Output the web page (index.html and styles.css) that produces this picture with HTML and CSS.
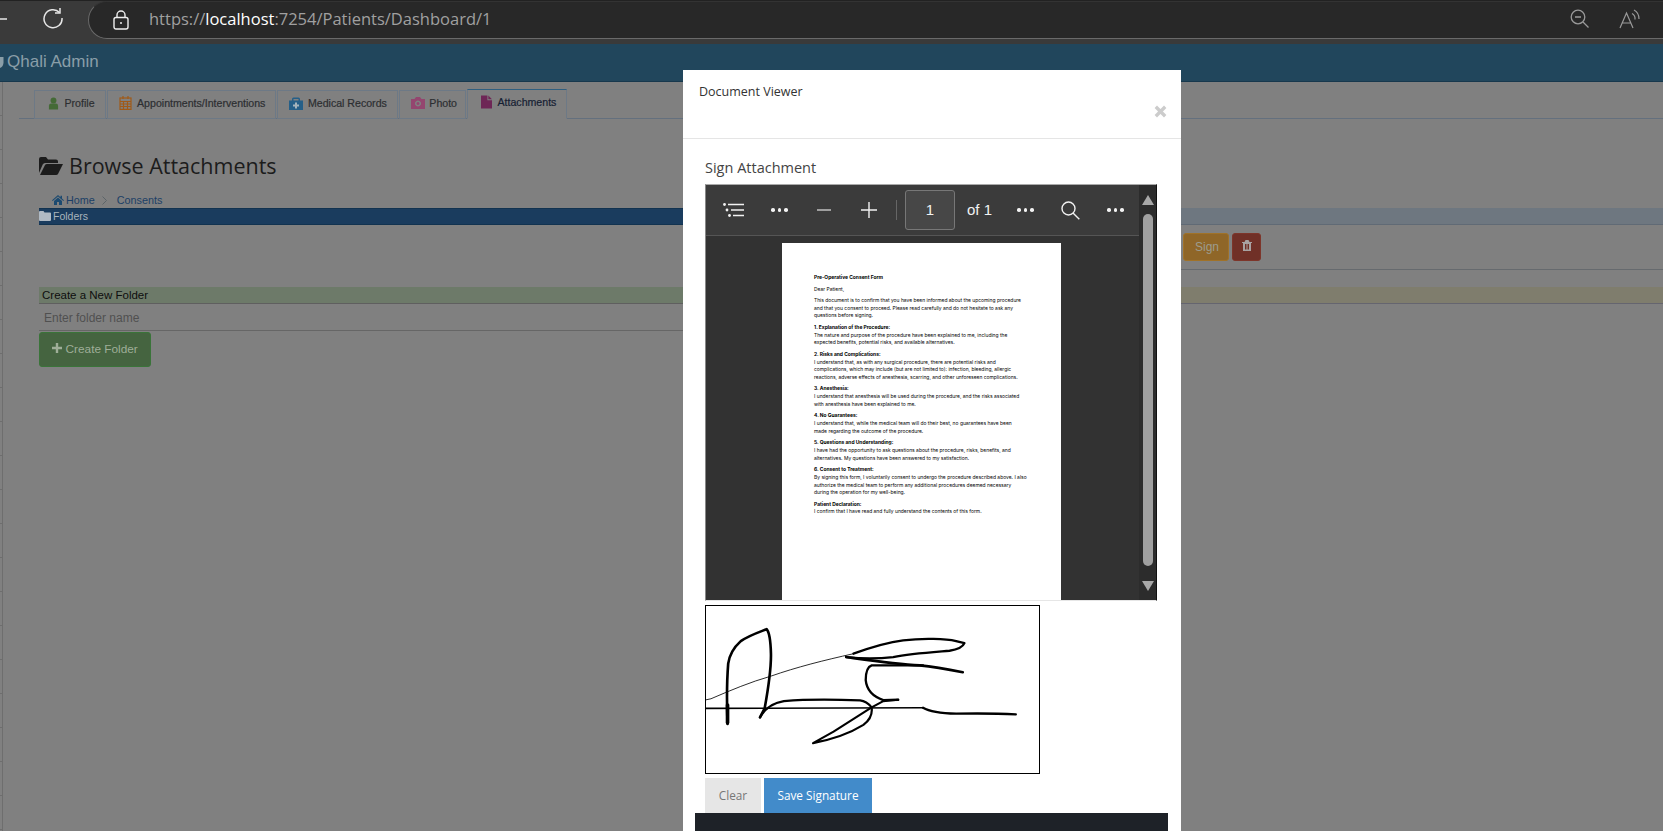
FILE: index.html
```html
<!DOCTYPE html>
<html lang="en">
<head>
    <meta charset="UTF-8">
    <meta name="viewport" content="width=device-width, initial-scale=1.0">
    <title>Patient Dashboard</title>
    <link rel="stylesheet" href="styles.css">
</head>
<body>
    <div class="browser-bar">
        <svg class="back-icon" width="8" height="4" viewBox="0 0 8 4"><path d="M0 2h7" stroke="#e8e8e8" stroke-width="1.5"/></svg>
        <svg class="reload-icon" width="22" height="22" viewBox="0 0 22 22" fill="none" stroke="#e6e6e6" stroke-width="1.5"><path d="M17.500 5.500A9 9 0 1 0 20 11"/><path d="M13 6h5V1"/></svg>
        <div class="url-pill">
            <svg class="lock-icon" width="16" height="20" viewBox="0 0 16 20" fill="none" stroke="#eee" stroke-width="1.4"><rect x="1" y="7.500" width="14" height="11.500" rx="2"/><path d="M4 7.500V5a4 4 0 0 1 8 0v2.500"/><circle cx="8" cy="13" r="1" fill="#eee" stroke="none"/></svg>
            <span class="url-text">https://<b>localhost</b>:7254/Patients/Dashboard/1</span>
            <svg class="zoom-out-icon" width="19" height="19" viewBox="0 0 19 19" fill="none" stroke="#9a9a9a" stroke-width="1.3"><circle cx="8" cy="8" r="6.800"/><path d="M5 8h6M13 13l5.500 5.500"/></svg>
            <svg class="read-icon" width="21" height="20" viewBox="0 0 21 20" fill="none" stroke="#9a9a9a" stroke-width="1.2"><path d="M1 19 7.500 4 14 19M3.500 14h8"/><path d="M13 4.500a6 6 0 0 1 3 6M15 1a10 10 0 0 1 5 9"/></svg>
        </div>
    </div>

    <div class="page">
        <div class="navbar">
            <svg class="brand-icon" width="4" height="11" viewBox="0 0 4 11"><path d="M0 0h3.500v6Q3 10 0 11z" fill="#8a9ea8"/></svg>
            <span class="brand">Qhali Admin</span>
        </div>

        <div class="content">
            <ul class="tabs">
                <li class="tab"><span class="tab-icon"><svg width="11" height="13" viewBox="0 0 12 13" fill="#446a36"><circle cx="6" cy="3.200" r="3.200"/><path d="M1 13V9q0-2.500 2.500-2.500h5Q11 6.500 11 9v4z"/></svg></span>Profile</li>
                <li class="tab"><span class="tab-icon"><svg width="13" height="14" viewBox="0 0 13 14" fill="none" stroke="#a05a18" stroke-width="1.200"><rect x="1" y="2" width="11" height="11.400"/><path d="M1 5.500h11M1 8h11M1 10.500h11M4.500 5.500v8M8.500 5.500v8M4 0v3M9 0v3"/></svg></span>Appointments/Interventions</li>
                <li class="tab"><span class="tab-icon"><svg width="14" height="13" viewBox="0 0 14 13"><path fill="#255f88" d="M0 3.500h3V2q0-1.500 1.500-1.500h5Q11 .5 11 2v1.500h3V13H0zM4.500 2v1.500h5V2z"/><path fill="#a4b4bc" d="M6 5.500h2v2h2v2H8v2H6v-2H4v-2h2z"/></svg></span>Medical Records</li>
                <li class="tab tab-photo"><span class="tab-icon"><svg width="14" height="12" viewBox="0 0 14 12"><path fill-rule="evenodd" fill="#94466f" d="M0 2h3.500L5 0h4l1.500 2H14v10H0zM7 3.500a3 3 0 1 0 .01 0zM7 5a1.500 1.500 0 1 1-.01 0z"/></svg></span>Photo</li>
                <li class="tab tab-active"><span class="tab-icon"><svg width="11" height="14" viewBox="0 0 12 14"><path fill="#6e2656" d="M0 0h7v5h5v9H0zM8 0l4 4H8z"/></svg></span>Attachments</li>
            </ul>

            <h1 class="page-title">
                <svg width="24" height="18" viewBox="0 0 24 18"><path fill="#1c1c1c" d="M0 16V2q0-2 2-2h5l2 2.500h8q2 0 2 2V6H6q-1.500 0-2.300 1.500z"/><path fill="#1c1c1c" d="M1 18 6 8q.5-1 2-1h16l-5 10q-.5 1-2 1z"/></svg>
                Browse Attachments
            </h1>

            <div class="breadcrumb">
                <svg width="12" height="10" viewBox="0 0 12 10"><path fill="#1c4a70" d="M6 0l2.500 2.200V.8h1.500v2.700L12 5.300l-.7.7L6 1.400.7 6 0 5.300zM2 6l4-3.400L10 6v4H7V7H5v3H2z"/></svg>
                <span class="crumb">Home</span>
                <svg class="crumb-sep" width="5" height="9" viewBox="0 0 5 9" fill="none" stroke="#5c6468" stroke-width="1"><path d="M.5.5l4 4-4 4"/></svg>
                <span class="crumb">Consents</span>
            </div>

            <div class="panels">
                <div class="panel-head panel-head-primary">
                    <svg width="12" height="10" viewBox="0 0 12 10"><path fill="#b0bac4" d="M0 1q0-1 1-1h3.500l1 1.500H11q1 0 1 1V9q0 1-1 1H1q-1 0-1-1z"/></svg>
                    Folders
                </div>
                <div class="files-col">
                    <div class="panel-head panel-head-info"></div>
                    <div class="file-row">
                        <button class="btn btn-sign">Sign</button>
                        <button class="btn btn-delete"><svg width="10" height="11" viewBox="0 0 10 11"><path fill="#a8a2a2" fill-rule="evenodd" d="M0 2h2.500L3.500 0h3l1 2H10v1H9v8H1V3H0zM3 4v5.500h1V4zM4.500 4v5.500h1V4zM6 4v5.500h1V4z"/></svg></button>
                    </div>
                </div>

                <div class="new-folder">
                    <div class="panel-head panel-head-success">Create a New Folder</div>
                    <input class="folder-input" type="text" placeholder="Enter folder name">
                    <button class="btn btn-create"><svg width="10" height="10" viewBox="0 0 10 10"><path fill="#9fae98" d="M3.800 0h2.400v3.800H10v2.400H6.200V10H3.800V6.200H0V3.800h3.800z"/></svg> Create Folder</button>
                </div>
                <div class="panel-head panel-head-warning"></div>
            </div>
        </div>

        <div class="modal">
            <div class="modal-header">
                <span class="modal-title">Document Viewer</span>
                <svg class="modal-close" width="13" height="13" viewBox="0 0 13 13"><path d="M1.800 1.800l9.400 9.400M11.200 1.800l-9.400 9.400" stroke="#ccc" stroke-width="3.400"/></svg>
            </div>
            <div class="modal-body">
                <h4 class="sign-title">Sign Attachment</h4>

                <div class="pdf-viewer">
                    <div class="pdf-main">
                        <div class="pdf-toolbar">
                            <svg class="tb-list" width="22" height="14" viewBox="0 0 22 14" fill="#f2f2f2"><circle cx="1.500" cy="1.500" r="1.400"/><circle cx="4" cy="7" r="1.400"/><circle cx="6.500" cy="12.500" r="1.400"/><path d="M5 .8h16v1.400H5zM8 6.300h13v1.400H8zM10 11.800h11v1.400H10z"/></svg>
                            <span class="tb-dots tb-dots-1"><i></i><i></i><i></i></span>
                            <svg class="tb-minus" width="14" height="2" viewBox="0 0 14 2"><path d="M0 1h14" stroke="#ccc" stroke-width="1.400"/></svg>
                            <svg class="tb-plus" width="16" height="16" viewBox="0 0 16 16"><path d="M0 8h16M8 0v16" stroke="#f2f2f2" stroke-width="1.400"/></svg>
                            <span class="tb-divider"></span>
                            <span class="tb-page">1</span>
                            <span class="tb-of">of 1</span>
                            <span class="tb-dots tb-dots-2"><i></i><i></i><i></i></span>
                            <svg class="tb-search" width="19" height="19" viewBox="0 0 19 19" fill="none" stroke="#f2f2f2" stroke-width="1.400"><circle cx="7.500" cy="7.500" r="6.500"/><path d="M12 12l6.300 6.300"/></svg>
                            <span class="tb-dots tb-dots-3"><i></i><i></i><i></i></span>
                        </div>
                        <div class="pdf-canvas">
                            <div class="pdf-page">
                                <p><b>Pre-Operative Consent Form</b></p>
                                <p>Dear Patient,</p>
                                <p>This document is to confirm that you have been informed about the upcoming procedure<br>and that you consent to proceed. Please read carefully and do not hesitate to ask any<br>questions before signing.</p>
                                <p><b>1. Explanation of the Procedure:</b><br>The nature and purpose of the procedure have been explained to me, including the<br>expected benefits, potential risks, and available alternatives.</p>
                                <p><b>2. Risks and Complications:</b><br>I understand that, as with any surgical procedure, there are potential risks and<br>complications, which may include (but are not limited to): infection, bleeding, allergic<br>reactions, adverse effects of anesthesia, scarring, and other unforeseen complications.</p>
                                <p><b>3. Anesthesia:</b><br>I understand that anesthesia will be used during the procedure, and the risks associated<br>with anesthesia have been explained to me.</p>
                                <p><b>4. No Guarantees:</b><br>I understand that, while the medical team will do their best, no guarantees have been<br>made regarding the outcome of the procedure.</p>
                                <p><b>5. Questions and Understanding:</b><br>I have had the opportunity to ask questions about the procedure, risks, benefits, and<br>alternatives. My questions have been answered to my satisfaction.</p>
                                <p><b>6. Consent to Treatment:</b><br>By signing this form, I voluntarily consent to undergo the procedure described above. I also<br>authorize the medical team to perform any additional procedures deemed necessary<br>during the operation for my well-being.</p>
                                <p><b>Patient Declaration:</b><br>I confirm that I have read and fully understand the contents of this form.</p>
                            </div>
                        </div>
                    </div>
                    <div class="pdf-scrollbar">
                        <span class="arrow-up"></span>
                        <span class="thumb"></span>
                        <span class="arrow-down"></span>
                    </div>
                </div>

                <div class="signature-box">
                    <svg width="333" height="167" viewBox="46 46 1003 504" fill="none" stroke="#000" stroke-linecap="round" stroke-linejoin="round">
                        <path stroke-width="5" d="M46 355L700 353"/>
                        <path stroke-width="7" d="M700 353C720 365 750 370 800 371C860 370 920 370 980 373"/>
                        <path stroke-width="8" d="M110 402C108 350 108 270 112 220C116 190 130 170 150 152C175 135 205 125 228 116C236 125 240 150 241 190C242 240 232 300 222 355L208 382"/>
                        <path stroke-width="11" d="M110 345L110 398"/>
                        <path stroke-width="2.500" d="M46 329L60 326C120 300 180 275 240 258C320 230 400 210 490 190"/>
                        <path stroke-width="7" d="M490 190C540 172 600 155 640 150C700 142 770 145 800 152L825 158C820 170 800 178 780 181C720 186 660 190 610 200C570 205 510 205 468 200"/>
                        <path stroke-width="8" d="M468 200C540 210 620 222 690 225C740 230 790 240 820 246"/>
                        <path stroke-width="7" d="M700 225L545 225C530 230 527 250 527 270C530 300 550 320 580 330L625 329"/>
                        <path stroke-width="6.500" d="M625 329L580 333L545 352L430 425L368 460C420 450 480 430 520 405C540 390 548 375 545 352C535 340 525 333 510 331C440 328 340 328 280 333C250 338 225 350 208 382"/>
                    </svg>
                </div>

                <div class="sign-actions">
                    <button class="sign-btn sign-clear">Clear</button>
                    <button class="sign-btn sign-save">Save Signature</button>
                </div>

                <div class="modal-dark-bar"></div>
            </div>
        </div>
    </div>
</body>
</html>
```

FILE: styles.css
```css
* {
    box-sizing: border-box;
}

html, body {
    margin: 0;
    height: 831px;
    overflow: hidden;
}

body {
    font-family: "Liberation Sans", Arial, sans-serif;
    background-color: #808080;
}

/* browser chrome */
.browser-bar {
    height: 44px;
    background-color: #3a3a3a;
    display: flex;
    align-items: flex-start;
    border-top: 1px solid #222;
    overflow: hidden;
}

.back-icon {
    margin-top: 16px;
    flex-shrink: 0;
}

.reload-icon {
    margin: 6px 0 0 34px;
    flex-shrink: 0;
}

.url-pill {
    flex: 1;
    height: 38px;
    margin: 0 -40px 0 24px;
    padding: 0 62px 0 24px;
    background-color: #282828;
    border: 1px solid #6a6a6a;
    border-top-color: #333;
    border-radius: 19px;
    display: flex;
    align-items: center;
}

.url-text {
    margin: 0 0 3px 20px;
    font-family: "Open Sans", sans-serif;
    font-size: 16.500px;
    color: #a0a0a0;
    flex: 1;
}

.url-text b {
    font-weight: 400;
    color: #fff;
}

.zoom-out-icon {
    margin: 0 -2px 3px 0;
}

.read-icon {
    margin: 0 0 3px 32px;
}

/* app */
.page {
    position: relative;
    height: 787px;
}

.navbar {
    height: 38px;
    background-color: #21465c;
    border-bottom: 1px solid #17384d;
    display: flex;
    align-items: center;
    padding-bottom: 1px;
}

.brand {
    margin-left: 3px;
    font-size: 17px;
    color: #8a9ea8;
}

.content {
    height: 749px;
    padding-left: 3px;
    background:
        linear-gradient(#6e6e6e, #6e6e6e) 2px 0 / 1px 100% no-repeat,
        repeating-linear-gradient(to bottom, transparent 0 33px, #6e6e6e 33px 34px) 0 0 / 2px 100% no-repeat,
        #808080;
}

.tabs {
    list-style: none;
    margin: 0 0 0 16px;
    padding: 7px 0 0 15px;
    display: flex;
    align-items: flex-end;
    gap: 1px;
    height: 37px;
    border-bottom: 1px solid #64707e;
}

.tab {
    height: 29px;
    margin-bottom: -1px;
    padding: 0 10px 3px;
    display: flex;
    align-items: center;
    gap: 3.500px;
    font-size: 10.600px;
    color: #2c2e31;
    -webkit-text-stroke: .2px;
    border: 1px solid #6d7986;
}

.tab-icon {
    width: 16px;
    display: flex;
    justify-content: center;
}

.tab-photo {
    padding-right: 8px;
}

.tab-active {
    height: 30px;
    padding-bottom: 5px;
    color: #161e33;
    border-top-color: #2f5f80;
    border-bottom-color: #808080;
}

.page-title {
    margin: 29px 0 0 36px;
    font-family: "Open Sans", sans-serif;
    font-size: 21.500px;
    font-weight: 400;
    line-height: 36px;
    color: #1c1c1c;
    display: flex;
    align-items: center;
    gap: 6px;
}

.breadcrumb {
    margin: 8px 0 0 49px;
    height: 16px;
    display: flex;
    align-items: center;
    font-size: 10.800px;
    color: #1c3f66;
    gap: 2px;
}

.crumb-sep {
    margin: 0 8px 0 5px;
}

.panels {
    margin: 0 0 0 36px;
    display: grid;
    grid-template-columns: 644px 1fr;
    grid-template-rows: 79px auto;
    align-items: start;
}

.panel-head {
    height: 17px;
    font-size: 11.500px;
    line-height: 16px;
}

.panel-head-primary {
    background-color: #1a3c5e;
    border-top: 1px solid #123350;
    border-bottom: 1px solid #123350;
    padding-bottom: 1px;
    font-size: 10.500px;
    color: #a8b4bc;
    display: flex;
    align-items: center;
    gap: 2px;
}

.panel-head-info {
    background-color: #6e7780;
    border-bottom: 1px solid #606a75;
}

.file-row {
    height: 45px;
    display: flex;
    justify-content: flex-start;
    align-items: center;
    padding-left: 500px;
    gap: 3px;
    border-bottom: 1px solid #666a6e;
}

.btn {
    border: 1px solid transparent;
    border-radius: 3px;
    font-family: "Liberation Sans", Arial, sans-serif;
    font-size: 12px;
    padding: 0;
}

.btn-sign {
    width: 46px;
    height: 28px;
    padding-left: 2px;
    background-color: #8f6628;
    border-color: #a07228;
    color: #9c9c8e;
}

.btn-delete {
    width: 29px;
    height: 28px;
    background-color: #703027;
    border-color: #7d352a;
}

.panel-head-success {
    background-color: #6d7a69;
    color: #0e0e0e;
    padding-left: 3px;
    border-bottom: 1px solid #5f5f5f;
}

.panel-head-warning {
    background-color: #7f7d6d;
    border-bottom: 1px solid #65656f;
}

.folder-input {
    display: block;
    width: 100%;
    height: 27px;
    padding: 2px 5px 0;
    border: none;
    border-bottom: 1px solid #666;
    background-color: #808080;
    font-family: "Liberation Sans", Arial, sans-serif;
    font-size: 12px;
    outline: none;
}

.folder-input::placeholder {
    color: #505050;
}

.btn-create {
    display: block;
    width: 112px;
    height: 35px;
    margin-top: 1px;
    padding-bottom: 2px;
    font-size: 11.800px;
    background-color: #456440;
    border-color: #3a7439;
    color: #9fae98;
}

/* modal */
.modal {
    position: absolute;
    top: 26px;
    left: 683px;
    width: 498px;
    height: 761px;
    background-color: #fff;
    overflow: hidden;
    font-family: "Open Sans", sans-serif;
}

.modal-header {
    position: relative;
    height: 69px;
    padding: 9px 16px 0;
    border-bottom: 1px solid #e5e5e5;
}

.modal-title {
    font-size: 12.500px;
    color: #333;
}

.modal-close {
    position: absolute;
    top: 35px;
    right: 14px;
}

.modal-body {
    padding: 18px 0 0 22px;
}

.sign-title {
    margin: 0;
    height: 27px;
    font-size: 14.500px;
    font-weight: 400;
    line-height: 22px;
    color: #444;
}

.pdf-viewer {
    width: 452px;
    height: 417px;
    display: flex;
    background-color: #323232;
    border: 1px solid #888;
    border-top-color: #aaa;
    border-right: 1px solid #111;
    border-bottom-color: #e6e6e6;
    overflow: hidden;
}

.pdf-main {
    width: 433px;
}

.pdf-toolbar {
    position: relative;
    height: 51px;
    background-color: #3b3b3b;
    border-bottom: 1px solid #555;
}

/* toolbar icons sit at their own spots inside the viewer toolbar */
.pdf-toolbar > * {
    position: absolute;
}

.tb-list { left: 17px; top: 18px; }
.tb-minus { left: 111px; top: 24px; }
.tb-plus { left: 155px; top: 17px; }
.tb-search { left: 355px; top: 16px; }

.tb-dots {
    top: 23px;
    display: flex;
    gap: 3px;
}

.tb-dots i {
    width: 3.500px;
    height: 3.500px;
    border-radius: 50%;
    background-color: #f2f2f2;
}

.tb-dots-1 { left: 65px; }
.tb-dots-2 { left: 311px; }
.tb-dots-3 { left: 401px; }

.tb-divider {
    left: 190px;
    top: 15px;
    width: 1px;
    height: 20px;
    background-color: #666;
}

.tb-page {
    left: 199px;
    top: 5px;
    width: 50px;
    height: 40px;
    background-color: #474747;
    border: 1px solid #777;
    border-radius: 3px;
    font-family: "Liberation Sans", Arial, sans-serif;
    font-size: 15px;
    line-height: 38px;
    text-align: center;
    color: #f2f2f2;
}

.tb-of {
    left: 261px;
    top: 15px;
    font-family: "Liberation Sans", Arial, sans-serif;
    font-size: 15px;
    line-height: 20px;
    color: #f2f2f2;
}

.pdf-canvas {
    height: 365px;
    padding: 7px 0 0 76px;
}

.pdf-page {
    width: 279px;
    height: 400px;
    background-color: #fff;
    padding: 31px 0 0 32px;
    font-family: Inter, sans-serif;
    font-size: 4.950px;
    line-height: 7.700px;
    color: #000;
    white-space: nowrap;
}

.pdf-page p {
    margin: 0 0 3.800px;
}

.pdf-scrollbar {
    position: relative;
    width: 17px;
    background-color: #2c2c2c;
}

.pdf-scrollbar > * {
    position: absolute;
}

.arrow-up {
    left: 3px;
    top: 10px;
    border: 6.500px solid transparent;
    border-top: 0;
    border-bottom: 10px solid #a8a8a8;
}

.thumb {
    left: 4px;
    top: 29px;
    width: 10px;
    height: 352px;
    border-radius: 5px;
    background-color: #a0a0a0;
}

.arrow-down {
    left: 3px;
    top: 396px;
    border: 6.500px solid transparent;
    border-bottom: 0;
    border-top: 10px solid #a8a8a8;
}

.signature-box {
    width: 335px;
    height: 169px;
    margin-top: 4px;
    border: 1px solid #000;
}

.signature-box svg {
    display: block;
}

.sign-actions {
    margin-top: 4px;
    display: flex;
    gap: 3px;
}

.sign-btn {
    height: 35px;
    padding: 0 0 2px;
    border: none;
    font-family: "Open Sans", sans-serif;
    font-size: 11.800px;
}

.sign-clear {
    width: 56px;
    background-color: #e6e6e6;
    color: #777;
}

.sign-save {
    width: 108px;
    background-color: #428bca;
    color: #fff;
}

.modal-dark-bar {
    width: 473px;
    height: 40px;
    margin-left: -10px;
    background-color: #1e2228;
}
```
